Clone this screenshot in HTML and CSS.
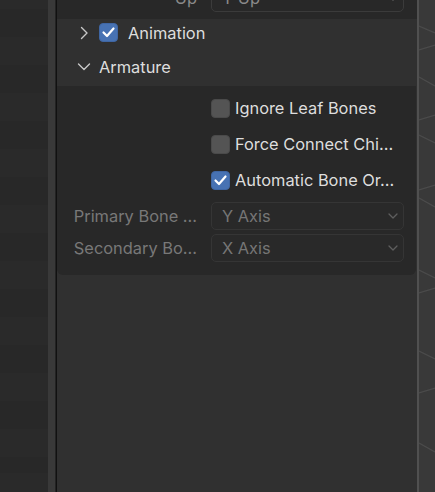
FILE: index.html
```html
<!DOCTYPE html>
<html>
<head>
<meta charset="utf-8">
<link rel="stylesheet" href="styles.css">
</head>
<body>
<div class="app">
  <div class="outliner"></div>
  <div class="split"></div>
  <div class="props">
    <div class="prev">
      <div class="prop-row up-row">
        <span class="label">Up</span>
        <div class="select"><span>Y Up</span>
          <svg class="dd" width="10" height="6" viewBox="0 0 10 6"><path d="M1 1 L5 5 L9 1" fill="none" stroke="#6a6a6a" stroke-width="1.3" stroke-linecap="round" stroke-linejoin="round"/></svg>
        </div>
      </div>
    </div>
    <div class="headers">
      <div class="hrow">
        <svg class="chev" width="14" height="14" viewBox="0 0 14 14"><path d="M4.5 1.5 L10 7 L4.5 12.5" fill="none" stroke="#c8c8c8" stroke-width="1.4" stroke-linecap="round" stroke-linejoin="round"/></svg>
        <span class="cb on"><svg width="19" height="19" viewBox="0 0 19 19"><path d="M4.5 9.5 L8 13 L14.5 5.5" fill="none" stroke="#fff" stroke-width="2.2" stroke-linecap="round" stroke-linejoin="round"/></svg></span>
        <span class="htext anim">Animation</span>
      </div>
      <div class="hrow">
        <svg class="chev" width="14" height="14" viewBox="0 0 14 14"><path d="M1.5 4 L7 9.5 L12.5 4" fill="none" stroke="#c8c8c8" stroke-width="1.4" stroke-linecap="round" stroke-linejoin="round"/></svg>
        <span class="htext">Armature</span>
      </div>
    </div>
    <div class="content">
      <div class="grid">
        <span></span>
        <div class="check-row"><span class="cb"></span><span class="ctext">Ignore Leaf Bones</span></div>
        <span></span>
        <div class="check-row"><span class="cb"></span><span class="ctext">Force Connect Chi...</span></div>
        <span></span>
        <div class="check-row"><span class="cb on"><svg width="19" height="19" viewBox="0 0 19 19"><path d="M4.5 9.5 L8 13 L14.5 5.5" fill="none" stroke="#fff" stroke-width="2.2" stroke-linecap="round" stroke-linejoin="round"/></svg></span><span class="ctext">Automatic Bone Or...</span></div>
        <span class="label dim">Primary Bone ...</span>
        <div class="select dis"><span>Y Axis</span>
          <svg class="dd" width="10" height="6" viewBox="0 0 10 6"><path d="M1 1 L5 5 L9 1" fill="none" stroke="#5e5e5e" stroke-width="1.3" stroke-linecap="round" stroke-linejoin="round"/></svg>
        </div>
        <span class="label dim">Secondary Bo...</span>
        <div class="select dis"><span>X Axis</span>
          <svg class="dd" width="10" height="6" viewBox="0 0 10 6"><path d="M1 1 L5 5 L9 1" fill="none" stroke="#5e5e5e" stroke-width="1.3" stroke-linecap="round" stroke-linejoin="round"/></svg>
        </div>
      </div>
    </div>
  </div>
  <div class="edge"></div>
  <div class="viewport">
    <svg width="16" height="492" viewBox="0 0 16 492">
      <g stroke="#4b4b4b" stroke-width="1.2" fill="none">
        <path d="M0 26 L16 33"/>
        <path d="M0 50 L16 45"/>
        <path d="M0 77 L16 86"/>
        <path d="M0 120 L16 115"/>
        <path d="M0 135 L16 143"/>
        <path d="M0 190 L16 185"/>
        <path d="M0 198 L16 207"/>
        <path d="M0 270 L16 278"/>
        <path d="M0 293 L16 288"/>
        <path d="M0 351 L16 359"/>
        <path d="M0 393 L16 388"/>
        <path d="M0 443 L16 452"/>
      </g>
    </svg>
  </div>
</div>
</body>
</html>
```

FILE: styles.css
```css
* { box-sizing: border-box; }
html, body { margin: 0; padding: 0; }
body {
  width: 435px;
  height: 492px;
  overflow: hidden;
  background: #303030;
  font-family: Inter, "Noto Sans", sans-serif;
  font-size: 16.4px;
}
.app {
  display: flex;
  height: 492px;
}
.outliner {
  width: 48px;
  flex: none;
  background: repeating-linear-gradient(to bottom, #2a2a2a 0 28px, #282828 28px 56px);
  background-position: 0 -19px;
}
.split {
  width: 9px;
  flex: none;
  background: linear-gradient(to right, #393939 0 7px, #232323 7px 8px, #111111 8px 9px);
}
.props {
  width: 360px;
  flex: none;
  background: #303030;
  display: flex;
  flex-direction: column;
}
.prev {
  height: 19px;
  background: #282828;
  overflow: hidden;
  flex: none;
}
.prop-row {
  display: grid;
  grid-template-columns: 140px 193px;
  column-gap: 14px;
  align-items: center;
}
.up-row {
  margin-top: -16px;
  height: 28px;
}
.label {
  text-align: right;
  color: #8a8a8a;
  white-space: nowrap;
}
.label.dim { color: #787878; }
.select {
  height: 28px;
  border: 1px solid #3b3b3b;
  border-radius: 5px;
  background: #282828;
  display: flex;
  align-items: center;
  justify-content: space-between;
  padding: 0 5px 0 10px;
  color: #8a8a8a;
}
.select.dis { color: #767676; background: #292929; border-color: #353535; }
.headers {
  flex: none;
  height: 67px;
  padding-top: 1px;
  display: flex;
  flex-direction: column;
  gap: 9px;
}
.hrow {
  height: 25px;
  display: flex;
  align-items: center;
  padding-left: 20px;
}
.chev { flex: none; margin-right: 8px; }
.htext { color: #dedede; }
.htext.anim { margin-left: 10px; }
.cb {
  width: 19px;
  height: 19px;
  flex: none;
  border-radius: 4px;
  background: #545454;
  border: 1px solid #4a4a4a;
  display: inline-flex;
}
.cb.on { background: #4772b3; border-color: #3f66a3; }
.cb svg { margin: -1px; }
.content {
  flex: none;
  background: #282828;
  border-radius: 0 0 6px 6px;
  width: 359px;
  padding: 4px 0 13px;
}
.grid {
  display: grid;
  grid-template-columns: 140px 193px;
  column-gap: 14px;
  grid-template-rows: 36px 36px 36px 32px 32px;
  align-items: center;
}
.grid > .select { align-self: end; }
.grid > .label { align-self: end; line-height: 28px; }
.check-row {
  display: flex;
  align-items: center;
  gap: 5px;
}
.ctext { color: #dedede; white-space: nowrap; }
.edge {
  width: 2px;
  flex: none;
  background: #505050;
}
.viewport {
  width: 16px;
  flex: none;
  background: #393939;
}
.viewport svg { display: block; }
```
